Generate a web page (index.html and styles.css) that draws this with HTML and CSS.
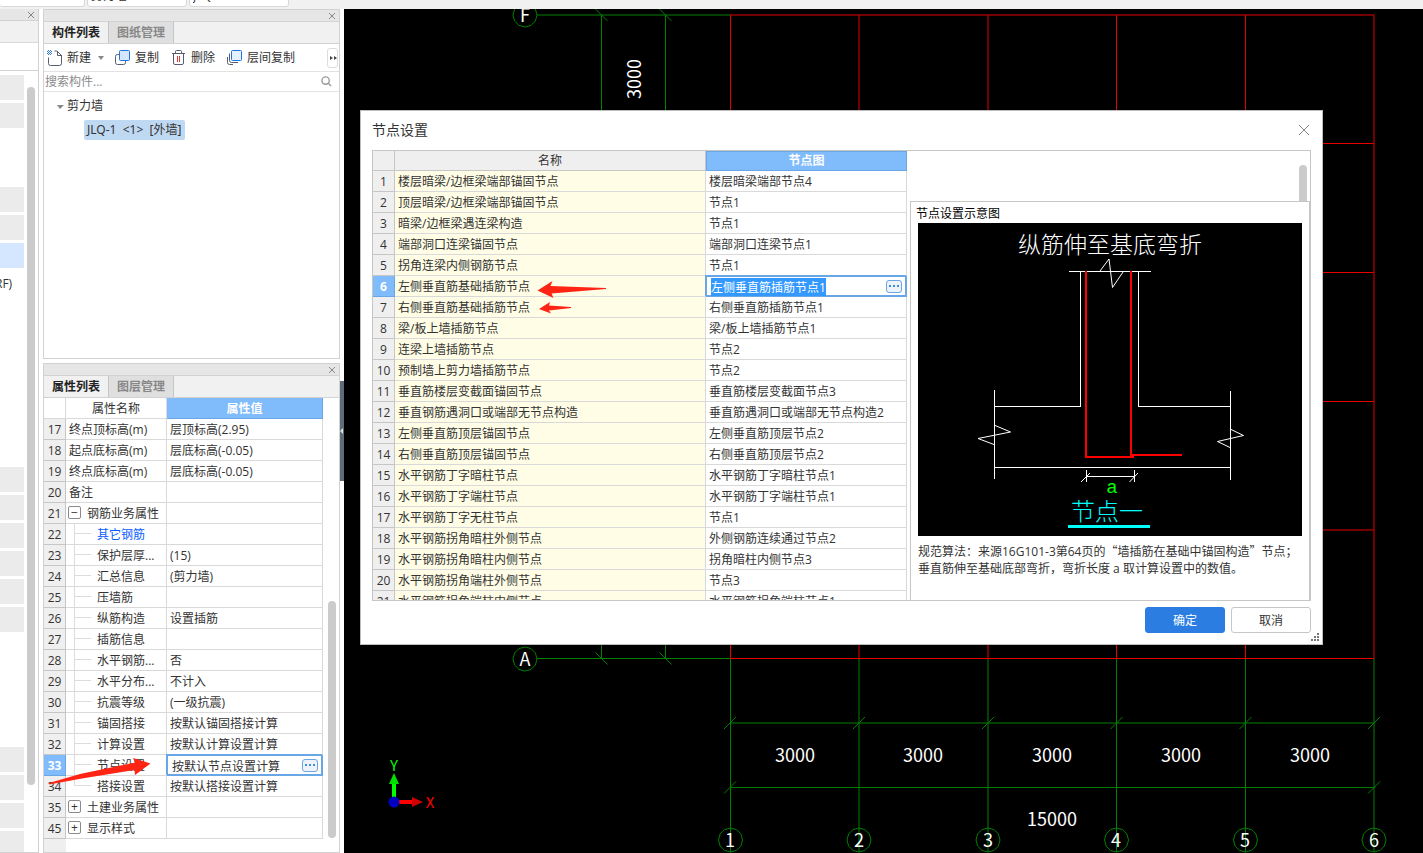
FILE: index.html
```html
<!DOCTYPE html>
<html lang="zh-CN">
<head>
  <meta charset="UTF-8">
  <meta name="viewport" content="width=device-width, initial-scale=1.0">
  <title>节点设置</title>
  <link rel="stylesheet" href="styles.css">
</head>
<body>
  <header class="topbar">
    <select class="combo combo-first" aria-label="楼层"><option></option></select>
    <select class="combo" aria-label="构件类型"><option>剪力墙</option></select>
    <select class="combo" aria-label="构件"><option>JLQ-1</option></select>
  </header>

  <main class="workspace">
    <!-- Navegação -->
    <nav class="nav" aria-label="导航树">
      <div class="panel-title">
        <button class="close" aria-label="关闭"><svg viewBox="0 0 8 8"><path d="M1 1l6 6M7 1L1 7"/></svg></button>
      </div>
      <div class="nav-tabs"></div>
      <div class="nav-tools"></div>
      <div class="nav-body">
        <ul class="nav-list">
          <li class="fill"></li><li class="fill"></li><li></li><li></li>
          <li class="fill"></li><li class="fill"></li><li class="current"></li><li>RF)</li>
          <li></li><li></li><li></li><li></li><li></li><li></li>
          <li class="fill"></li><li class="fill"></li><li class="fill"></li>
          <li class="fill"></li><li class="fill"></li><li class="fill"></li>
          <li></li><li></li><li></li><li></li>
          <li class="fill"></li><li class="fill"></li><li class="fill"></li><li class="fill"></li>
        </ul>
        <div class="nav-scroll"></div>
      </div>
    </nav>

    <div class="side">
      <section class="panel">
        <div class="panel-title">
          <button class="close" aria-label="关闭"><svg viewBox="0 0 8 8"><path d="M1 1l6 6M7 1L1 7"/></svg></button>
        </div>
        <div class="tabs">
          <button class="tab active">构件列表</button>
          <button class="tab">图纸管理</button>
        </div>
        <div class="toolbar">
          <button class="tool">
            <svg viewBox="0 0 16 16"><path d="M1.500 7.500v6q0 2 2 2h9q2 0 2-2V5.500l-4.500-4.500H7.500M10.500 1v4.500H15" fill="none" stroke="#555d70"/><path d="M1 0h1v1H1zM3 0h1v1H3zM0 1h1v1H0zM2 1h1v1H2zM4 1h1v1H4zM1 2h1v1H1zM3 2h1v1H3zM0 3h1v1H0zM2 3h1v1H2zM4 3h1v1H4zM1 4h1v1H1zM3 4h1v1H3z" fill="#2d7be5"/></svg>
            新建
          </button>
          <span class="caret"></span>
          <button class="tool">
            <svg viewBox="0 0 16 16"><path d="M5 4.500H2.500q-2 0-2 2v6q0 2 2 2h6q2 0 2-2V10" fill="none" stroke="#555d70"/><rect x="4.500" y=".5" width="10" height="10" rx="1" fill="#d3e6fc" stroke="#1e74e0"/></svg>
            复制
          </button>
          <button class="tool">
            <svg viewBox="0 0 16 16"><path d="M1 3.500h13M4.500 3V1.500q0-1 1-1h4q1 0 1 1V3M2.500 4v9q0 1.500 1.500 1.500h7q1.500 0 1.500-1.500V4" fill="none" stroke="#555d70"/><path d="M6.500 6v6M8.500 6v6" stroke="#e33b3b"/></svg>
            删除
          </button>
          <button class="tool">
            <svg viewBox="0 0 16 16"><path d="M2.500 3.500v7q0 2 2 2H11M.5 7v5.500q0 2 2 2H6" fill="none" stroke="#555d70"/><rect x="4.500" y=".5" width="10" height="10" rx="1" fill="#e6f1fe" stroke="#1e74e0"/></svg>
            层间复制
          </button>
          <button class="more" aria-label="更多"><svg viewBox="0 0 8 6"><path d="M1 1l3 2-3 2zM5 1l3 2-3 2z" fill="#444"/></svg></button>
        </div>
        <div class="search">
          <input type="text" placeholder="搜索构件..." aria-label="搜索构件">
          <svg viewBox="0 0 12 12"><circle cx="5" cy="5" r="4" fill="none" stroke="#999" stroke-width="1.500"/><path d="M8 8l3 3" stroke="#999" stroke-width="1.500"/></svg>
        </div>
        <ul class="tree">
          <li><span class="caret"></span>剪力墙
            <ul>
              <li><span class="picked">JLQ-1  &lt;1&gt;  [外墙]</span></li>
            </ul>
          </li>
        </ul>
      </section>

      <section class="panel panel-props">
        <div class="panel-title">
          <button class="close" aria-label="关闭"><svg viewBox="0 0 8 8"><path d="M1 1l6 6M7 1L1 7"/></svg></button>
        </div>
        <div class="tabs">
          <button class="tab active">属性列表</button>
          <button class="tab">图层管理</button>
        </div>
        <div class="props">
          <div class="props-rows">
            <table class="grid">
              <colgroup><col class="c-num"><col class="c-prop"><col class="c-val"></colgroup>
              <thead>
                <tr><th></th><th>属性名称</th><th class="on">属性值</th></tr>
              </thead>
              <tbody>
                <tr><th>17</th><td>终点顶标高(m)</td><td>层顶标高(2.95)</td></tr>
                <tr><th>18</th><td>起点底标高(m)</td><td>层底标高(-0.05)</td></tr>
                <tr><th>19</th><td>终点底标高(m)</td><td>层底标高(-0.05)</td></tr>
                <tr><th>20</th><td>备注</td><td></td></tr>
                <tr><th>21</th><td><button class="fold" aria-label="折叠">−</button>钢筋业务属性</td><td></td></tr>
                <tr><th>22</th><td class="child"><a href="#">其它钢筋</a></td><td></td></tr>
                <tr><th>23</th><td class="child">保护层厚...</td><td>(15)</td></tr>
                <tr><th>24</th><td class="child">汇总信息</td><td>(剪力墙)</td></tr>
                <tr><th>25</th><td class="child">压墙筋</td><td></td></tr>
                <tr><th>26</th><td class="child">纵筋构造</td><td>设置插筋</td></tr>
                <tr><th>27</th><td class="child">插筋信息</td><td></td></tr>
                <tr><th>28</th><td class="child">水平钢筋...</td><td>否</td></tr>
                <tr><th>29</th><td class="child">水平分布...</td><td>不计入</td></tr>
                <tr><th>30</th><td class="child">抗震等级</td><td>(一级抗震)</td></tr>
                <tr><th>31</th><td class="child">锚固搭接</td><td>按默认锚固搭接计算</td></tr>
                <tr><th>32</th><td class="child">计算设置</td><td>按默认计算设置计算</td></tr>
                <tr><th class="on">33</th><td class="child">节点设置</td><td class="editing"><div class="editor"><input type="text" value="按默认节点设置计算" aria-label="节点设置"><button class="dots" aria-label="选择"><i></i><i></i><i></i></button></div></td></tr>
                <tr><th>34</th><td class="child last">搭接设置</td><td>按默认搭接设置计算</td></tr>
                <tr><th>35</th><td><button class="fold" aria-label="展开">+</button>土建业务属性</td><td></td></tr>
                <tr><th>45</th><td><button class="fold" aria-label="展开">+</button>显示样式</td><td></td></tr>
              </tbody>
            </table>
          </div>
          <div class="props-scroll"></div>
        </div>
      </section>
    </div>

    <div class="splitter"><button class="handle" aria-label="收起"></button></div>

    <!-- Desenho dos eixos -->
    <div class="canvas">
      <svg viewBox="344 9 1079 844" preserveAspectRatio="xMinYMin slice">
        <defs>
          <path id="bubble" d="M12 0L10.400 6 6 10.400 0 12-6 10.400-10.400 6-12 0-10.400-6-6-10.400 0-12 6-10.400 10.400-6z"/>
          <path id="up" d="M-6 6L6-6"/>
          <path id="down" d="M-6-6L6 6"/>
        </defs>
        <g class="axis">
          <path d="M537 15H730M537 658.500H730M601.500 15V658M665.500 15V658"/>
          <path d="M730.500 658V852M859 658V852M988 658V852M1116.500 658V852M1245.500 658V852M1374 658V852"/>
          <path d="M730 723H1374M730 787.500H1374"/>
          <use href="#down" x="601.500" y="15"/><use href="#down" x="665.500" y="15"/>
          <use href="#down" x="601.500" y="658.500"/><use href="#down" x="665.500" y="658.500"/>
          <use href="#up" x="730" y="723"/><use href="#up" x="859" y="723"/><use href="#up" x="988" y="723"/>
          <use href="#up" x="1116.500" y="723"/><use href="#up" x="1245.500" y="723"/><use href="#up" x="1374" y="723"/>
          <use href="#up" x="730" y="787.500"/><use href="#up" x="1374" y="787.500"/>
          <use href="#bubble" x="525" y="15"/><use href="#bubble" x="525" y="659"/>
          <use href="#bubble" x="730.500" y="840"/><use href="#bubble" x="859" y="840"/><use href="#bubble" x="988" y="840"/>
          <use href="#bubble" x="1116.500" y="840"/><use href="#bubble" x="1245.500" y="840"/><use href="#bubble" x="1374" y="840"/>
        </g>
        <path class="beam" d="M730 15H1374M730 143.500H1374M730 272.500H1374M730 401.500H1374M730 530H1374M730 658.500H1374M730.500 15V658M859 15V658M988 15V658M1116.500 15V658M1245.500 15V658M1374 15V658"/>
        <g class="dim">
          <text x="525" y="22">F</text>
          <text x="525" y="666">A</text>
          <text x="730" y="847">1</text>
          <text x="859" y="847">2</text>
          <text x="988" y="847">3</text>
          <text x="1116" y="847">4</text>
          <text x="1245" y="847">5</text>
          <text x="1374" y="847">6</text>
          <text x="795" y="762">3000</text>
          <text x="923" y="762">3000</text>
          <text x="1052" y="762">3000</text>
          <text x="1181" y="762">3000</text>
          <text x="1310" y="762">3000</text>
          <text x="1052" y="826">15000</text>
          <text transform="translate(641 79) rotate(-90)">3000</text>
        </g>
        <path d="M399 802h14" stroke="#f00" stroke-width="4"/>
        <path d="M412 797l11 5-11 5z" fill="#d00000"/>
        <path d="M394 798v-15" stroke="#0f0" stroke-width="4"/>
        <path d="M389 784l5-11 5 11z" fill="#00e000"/>
        <circle cx="394" cy="802" r="5.500" fill="#0000c0"/>
        <text class="gizmo-y" x="394" y="771">Y</text>
        <text class="gizmo-x" x="430" y="808">X</text>
      </svg>
    </div>
  </main>

  <div class="dialog" role="dialog" aria-labelledby="dialogTitle">
    <div class="dialog-head">
      <h1 id="dialogTitle">节点设置</h1>
      <button class="dialog-close" aria-label="关闭"><svg viewBox="0 0 12 12"><path d="M1 1l10 10M11 1L1 11"/></svg></button>
    </div>

    <div class="dialog-body">
      <div class="nodes">
        <table class="grid grid-nodes">
          <colgroup><col class="c-num"><col class="c-name"><col class="c-node"></colgroup>
          <thead>
            <tr><th></th><th>名称</th><th class="on bold">节点图</th></tr>
          </thead>
          <tbody>
            <tr><th>1</th><td>楼层暗梁/边框梁端部锚固节点</td><td>楼层暗梁端部节点4</td></tr>
            <tr><th>2</th><td>顶层暗梁/边框梁端部锚固节点</td><td>节点1</td></tr>
            <tr><th>3</th><td>暗梁/边框梁遇连梁构造</td><td>节点1</td></tr>
            <tr><th>4</th><td>端部洞口连梁锚固节点</td><td>端部洞口连梁节点1</td></tr>
            <tr><th>5</th><td>拐角连梁内侧钢筋节点</td><td>节点1</td></tr>
            <tr><th class="on">6</th><td>左侧垂直筋基础插筋节点</td><td class="editing"><div class="editor"><input type="text" id="nodeInput" value="左侧垂直筋插筋节点1" aria-label="节点图"><button class="dots" aria-label="选择"><i></i><i></i><i></i></button></div></td></tr>
            <tr><th>7</th><td>右侧垂直筋基础插筋节点</td><td>右侧垂直筋插筋节点1</td></tr>
            <tr><th>8</th><td>梁/板上墙插筋节点</td><td>梁/板上墙插筋节点1</td></tr>
            <tr><th>9</th><td>连梁上墙插筋节点</td><td>节点2</td></tr>
            <tr><th>10</th><td>预制墙上剪力墙插筋节点</td><td>节点2</td></tr>
            <tr><th>11</th><td>垂直筋楼层变截面锚固节点</td><td>垂直筋楼层变截面节点3</td></tr>
            <tr><th>12</th><td>垂直钢筋遇洞口或端部无节点构造</td><td>垂直筋遇洞口或端部无节点构造2</td></tr>
            <tr><th>13</th><td>左侧垂直筋顶层锚固节点</td><td>左侧垂直筋顶层节点2</td></tr>
            <tr><th>14</th><td>右侧垂直筋顶层锚固节点</td><td>右侧垂直筋顶层节点2</td></tr>
            <tr><th>15</th><td>水平钢筋丁字暗柱节点</td><td>水平钢筋丁字暗柱节点1</td></tr>
            <tr><th>16</th><td>水平钢筋丁字端柱节点</td><td>水平钢筋丁字端柱节点1</td></tr>
            <tr><th>17</th><td>水平钢筋丁字无柱节点</td><td>节点1</td></tr>
            <tr><th>18</th><td>水平钢筋拐角暗柱外侧节点</td><td>外侧钢筋连续通过节点2</td></tr>
            <tr><th>19</th><td>水平钢筋拐角暗柱内侧节点</td><td>拐角暗柱内侧节点3</td></tr>
            <tr><th>20</th><td>水平钢筋拐角端柱外侧节点</td><td>节点3</td></tr>
            <tr><th>21</th><td>水平钢筋拐角端柱内侧节点</td><td>水平钢筋拐角端柱节点1</td></tr>
          </tbody>
        </table>
      </div>
      <div class="detail">
        <div class="detail-top"><div class="detail-scroll"></div></div>
        <div class="preview">
          <h2>节点设置示意图</h2>
          <svg class="diagram" viewBox="918 223 384 313">
            <rect x="918" y="223" width="384" height="313" fill="#000"/>
            <g fill="none" stroke="#fff" shape-rendering="crispEdges">
              <path d="M1069 271.500H1151M1080.500 271V406.500H994M1138.500 271V406.500H1230M994.500 390V479M1230.500 391V480M994 467.500H1230"/>
              <path d="M1086.500 470V482M1134.500 470V482M1086 476.500H1135"/>
            </g>
            <g fill="none" stroke="#fff">
              <path d="M1100 271L1109 259 1112.500 287.500 1123 272"/>
              <path d="M994 425L1010.500 432 978 438.500 994 444.500"/>
              <path d="M1230 429L1243.500 435.500 1217.500 441.500 1230 447.500"/>
              <path d="M1081 482L1090 473M1129.500 482L1138 473"/>
            </g>
            <path d="M1086 271V457H1134M1131 271V455H1182" fill="none" stroke="#f00" stroke-width="2"/>
            <text class="cad-title" x="1110" y="253">纵筋伸至基底弯折</text>
            <text class="cad-a" x="1112" y="493">a</text>
            <text class="cad-name" x="1107" y="520">节点一</text>
            <path d="M1068 526.500H1150" stroke="#0ff" stroke-width="3"/>
          </svg>
          <p>规范算法：来源16G101-3第64页的<span class="quote">“</span>墙插筋在基础中锚固构造<span class="quote">”</span>节点；<br>垂直筋伸至基础底部弯折，弯折长度 a 取计算设置中的数值。</p>
        </div>
      </div>
    </div>

    <div class="dialog-foot">
      <button class="btn primary">确定</button>
      <button class="btn">取消</button>
    </div>
    <svg class="grip" viewBox="0 0 8 8"><path d="M6 0h2v2H6zM3 3h2v2H3zM6 3h2v2H6zM0 6h2v2H0zM3 6h2v2H3zM6 6h2v2H6z" fill="#777"/></svg>
  </div>

  <!-- Setas de marcação -->
  <svg class="marks" width="620" height="800" aria-hidden="true">
    <path d="M537.500 290.500L552.500 281 550.500 286 606 288 606 289 551.500 293.500 553.500 298z"/>
    <path d="M539 309L550 302 549 305.500 571 307 571 308 549 310.500 551 313.500z"/>
    <path d="M49 783L80 774 135 762.500 133 758 150.500 763.500 135 775 134.500 770 85 778 49 784.500z"/>
  </svg>

  <script>
    // Seleciona o texto da célula em edição
    const nodeInput = document.getElementById("nodeInput");
    nodeInput.focus();
    nodeInput.select();
  </script>
</body>
</html>
```
FILE: styles.css
```css
* {
  margin: 0;
  padding: 0;
  box-sizing: border-box;
}

body {
  height: 100vh;
  display: flex;
  flex-direction: column;
  overflow: hidden;
  position: relative;
  background-color: #fff;
  color: #333;
  font-family: "Open Sans", "Noto Sans CJK SC", sans-serif;
  font-size: 12px;
  line-height: 20px;
}

button,
input,
select {
  font: inherit;
  color: inherit;
  border: none;
  background: none;
}

ul {
  list-style: none;
}

/* Barra superior */
.topbar {
  flex: none;
  height: 9px;
  display: flex;
  align-items: flex-end;
  gap: 2px;
  padding-bottom: 2px;
  overflow: hidden;
  background-color: #f1f1f1;
}

.combo {
  appearance: none;
  width: 100px;
  height: 22px;
  padding: 0 3px;
  border: 1px solid #d8d8d8;
  border-radius: 3px;
  background-color: #fff;
}

.combo-first {
  width: 85px;
  border-left: none;
}

.workspace {
  flex: 1;
  min-height: 0;
  display: flex;
}

.panel-title {
  flex: none;
  height: 12px;
  display: flex;
  align-items: center;
  justify-content: flex-end;
  padding-right: 3px;
  background-color: #e6e6e6;
  border-bottom: 1px solid #d2d2d2;
}

.close {
  display: flex;
}

.close svg {
  width: 8px;
  height: 8px;
}

.close path,
.dialog-close path {
  fill: none;
  stroke: #888;
}

/* Navegação esquerda */
.nav {
  flex: none;
  width: 39px;
  display: flex;
  flex-direction: column;
  border-right: 1px solid #d2d2d2;
  border-bottom: 1px solid #d2d2d2;
  margin-right: 4px;
}

.nav-tabs {
  flex: none;
  height: 22px;
  background-color: #f1f1f1;
  border-bottom: 1px solid #d9d9d9;
}

.nav-tools {
  flex: none;
  height: 28px;
  border-bottom: 1px solid #d2d2d2;
}

.nav-body {
  flex: 1;
  min-height: 0;
  display: flex;
  gap: 3px;
  overflow: hidden;
}

.nav-list {
  width: 24px;
  display: flex;
  flex-direction: column;
  gap: 3px;
  padding-top: 4px;
}

.nav-list li {
  flex: none;
  height: 25px;
  line-height: 25px;
  text-indent: -5px;
  overflow: hidden;
}

.nav-list .fill {
  background-color: #ebebeb;
}

.nav-list .current {
  background-color: #d4e7ff;
}

.nav-scroll {
  width: 8px;
  height: 698px;
  margin-top: 16px;
  border-radius: 4px;
  background-color: #cbcbcb;
}

/* Painéis */
.side {
  flex: none;
  width: 297px;
  display: flex;
  flex-direction: column;
  gap: 4px;
}

.panel {
  flex: none;
  height: 350px;
  display: flex;
  flex-direction: column;
  border: 1px solid #d2d2d2;
}

.panel-props {
  flex: 1;
  height: auto;
  min-height: 0;
}

.tabs {
  flex: none;
  display: flex;
  background-color: #f1f1f1;
  border-bottom: 1px solid #d2d2d2;
}

.tab {
  width: 65px;
  height: 21px;
  font-weight: bold;
  color: #888;
  background-color: #dfdfdf;
  border-right: 1px solid #c6c6c6;
}

.tab.active {
  color: #222;
  background-color: #f1f1f1;
}

.toolbar {
  flex: none;
  height: 28px;
  display: flex;
  align-items: center;
  gap: 12px;
  padding: 0 1px 0 3px;
  border-bottom: 1px solid #e2e2e2;
}

.tool {
  display: flex;
  align-items: center;
  gap: 4px;
  padding-top: 1px;
  white-space: nowrap;
}

.tool svg {
  width: 16px;
  height: 16px;
}

.caret {
  width: 0;
  height: 0;
  border: 3px solid transparent;
  border-top: 4px solid #888;
  border-bottom: none;
}

.toolbar .caret {
  margin: 0 -1px 0 -5px;
}

.more {
  width: 11px;
  height: 20px;
  margin-left: auto;
  border: 1px solid #ddd;
  border-radius: 3px;
  display: flex;
  align-items: center;
  justify-content: center;
}

.more svg {
  flex: none;
  width: 8px;
  height: 6px;
}

.search {
  flex: none;
  height: 20px;
  display: flex;
  align-items: center;
  padding: 0 7px 0 1px;
  border-bottom: 1px solid #e2e2e2;
}

.search input {
  flex: 1;
  min-width: 0;
  outline: none;
}

.search input::placeholder {
  color: #8c8c8c;
}

.search svg {
  width: 11px;
  height: 11px;
}

.tree {
  padding: 4px 0 0 13px;
}

.tree .caret {
  display: inline-block;
  vertical-align: middle;
  margin-right: 3px;
  border-width: 4px 4px 0 3px;
}

.tree ul {
  padding: 4px 0 0 27px;
}

.picked {
  display: inline-block;
  padding: 0 4px 0 3px;
  border-radius: 2px;
  background-color: #c0d9f3;
  font-family: "Noto Sans", "Noto Sans CJK SC", sans-serif;
  white-space: pre;
}

/* Tabelas */
.grid {
  border-collapse: separate;
  border-spacing: 0;
  table-layout: fixed;
  width: 279px;
}

.c-num {
  width: 22px;
}

.c-prop {
  width: 101px;
}

.c-val {
  width: 156px;
}

.c-name {
  width: 311px;
}

.c-node {
  width: 201px;
}

.grid th,
.grid td {
  height: 21px;
  padding: 2px 3px 0;
  line-height: 18px;
  border-right: 1px solid #d9d9d9;
  border-bottom: 1px solid #d9d9d9;
  white-space: nowrap;
  overflow: hidden;
}

.grid th {
  padding: 2px 0 0;
  font-weight: normal;
  text-align: center;
}

.grid td {
  text-align: left;
}

.grid tbody th {
  background-color: #efefef;
  border-color: #c6c6c6;
}

.grid .on {
  color: #fff;
  background-color: #80bbfb;
  border-color: #68a6e6;
}

.grid .on {
  font-weight: bold;
}

.grid a {
  color: #0a5cff;
  text-decoration: none;
}

.grid .child {
  padding-left: 31px;
  background-image: linear-gradient(#ddd, #ddd), linear-gradient(#ddd, #ddd);
  background-size: 1px 100%, 16px 1px;
  background-position: 8px 0, 9px 9px;
  background-repeat: no-repeat;
}

.grid .last {
  background-size: 1px 10px, 16px 1px;
}

.fold {
  width: 13px;
  height: 13px;
  margin: -4px 6px 0 -1px;
  border: 1px solid #8a8a8a;
  border-radius: 2px;
  line-height: 10px;
  vertical-align: middle;
}

.grid .editing {
  padding: 0 4px;
  border-color: #68a6e6;
  box-shadow: inset 0 0 0 1px #68a6e6, -1px -1px 0 0 #68a6e6;
}

.editor {
  height: 20px;
  display: flex;
  align-items: center;
}

.editor input {
  flex: 1;
  min-width: 0;
  height: 20px;
  padding: 2px 0 0 1px;
  line-height: 18px;
  outline: none;
}

.editor input::selection {
  color: #fff;
  background-color: #3399ff;
}

.dots {
  flex: none;
  width: 16px;
  height: 13px;
  border: 1px solid #68a6e6;
  border-radius: 3px;
  background-color: #eef2f9;
  display: flex;
  align-items: center;
  justify-content: center;
  gap: 2px;
}

.dots i {
  width: 2px;
  height: 2px;
  background-color: #3f8be0;
}

.grid-nodes {
  width: 534px;
}

.grid-nodes thead th {
  height: 20px;
  padding: 1px 0 0;
  border-color: #c6c6c6;
  background-color: #efefef;
}

.grid-nodes thead .on {
  padding: 0;
  background-color: #80bbfb;
  border: 1px solid #68a6e6;
}

.grid-nodes td:nth-child(2) {
  background-color: #fffde5;
}

.props {
  flex: 1;
  min-height: 0;
  display: flex;
  overflow: hidden;
}

.props-rows {
  flex: 1;
  background: linear-gradient(#efefef, #efefef) 0 100% / 22px 40px no-repeat;
}

.props-rows thead th {
  background-color: #fff;
}

.props-rows thead .on {
  background-color: #80bbfb;
}

.props-scroll {
  width: 8px;
  height: 237px;
  margin: 203px 3px 0 0;
  border-radius: 4px;
  background-color: #cbcbcb;
}

.splitter {
  flex: none;
  width: 4px;
  padding-top: 372px;
}

.handle {
  display: flex;
  align-items: center;
  width: 4px;
  height: 100px;
  background-color: #5f6b78;
}

.handle::before {
  content: "";
  border: 3px solid transparent;
  border-right-color: #ddd;
  border-left: none;
}

/* Área de desenho */
.canvas {
  flex: 1;
  min-width: 0;
  background-color: #000;
  overflow: hidden;
}

.canvas svg {
  display: block;
  width: 100%;
  height: 100%;
}

.axis {
  fill: none;
  stroke: #008000;
}

.beam {
  fill: none;
  stroke: #e60000;
}

.dim text {
  fill: #fff;
  font-family: "Noto Sans CJK SC", sans-serif;
  font-size: 18px;
  text-anchor: middle;
}

.gizmo-x,
.gizmo-y {
  font-family: "Noto Sans CJK SC", sans-serif;
  font-size: 15px;
  text-anchor: middle;
}

.gizmo-x {
  fill: #f00;
}

.gizmo-y {
  fill: #0f0;
}

/* Janela */
.dialog {
  position: absolute;
  left: 360px;
  top: 110px;
  width: 963px;
  padding: 0 11px 11px;
  background-color: #fff;
  border: 1px solid #bdbdbd;
}

.dialog-head {
  height: 39px;
  display: flex;
  align-items: center;
  justify-content: space-between;
  padding: 0 1px 2px 0;
}

.dialog-head h1 {
  font-size: 14px;
  font-weight: normal;
}

.dialog-close {
  display: flex;
}

.dialog-close svg {
  width: 12px;
  height: 12px;
}

.dialog-body {
  height: 451px;
  display: flex;
  gap: 3px;
  border: 1px solid #c6c6c6;
  overflow: hidden;
}

.nodes {
  flex: none;
  overflow: hidden;
}

.detail {
  flex: 1;
  min-width: 0;
  display: flex;
  flex-direction: column;
}

.detail-top {
  flex: none;
  height: 50px;
  display: flex;
  justify-content: flex-end;
  padding: 14px 3px 0 0;
}

.detail-scroll {
  width: 8px;
  border-radius: 4px 4px 0 0;
  background-color: #cbcbcb;
}

.preview {
  flex: 1;
  padding: 3px 7px 0;
  border: 1px solid #c6c6c6;
  border-bottom: none;
}

.preview h2 {
  margin-left: -2px;
  font-size: 12px;
  font-weight: normal;
  line-height: 18px;
  color: #000;
}

.diagram {
  display: block;
  width: 100%;
}

.diagram text {
  font-family: "Noto Sans CJK SC", sans-serif;
  font-weight: 300;
  text-anchor: middle;
}

.diagram .cad-title {
  font-size: 23px;
  fill: #fff;
}

.diagram .cad-name {
  font-size: 24px;
  fill: #0ff;
}

.diagram .cad-a {
  font-family: "Liberation Mono", monospace;
  font-size: 19px;
  font-weight: normal;
  fill: #0f0;
}

.preview p {
  margin-top: 6px;
  line-height: 17px;
  white-space: nowrap;
}

.quote {
  font-family: "Noto Sans CJK SC", sans-serif;
}

.dialog-foot {
  display: flex;
  justify-content: flex-end;
  gap: 6px;
  margin-top: 6px;
}

.btn {
  width: 80px;
  height: 26px;
  padding-top: 2px;
  border: 1px solid #c6c6c6;
  border-radius: 3px;
  background-color: #fff;
}

.btn.primary {
  color: #fff;
  background-color: #2b7de1;
  border-color: #2b7de1;
}

.grip {
  position: absolute;
  right: 3px;
  bottom: 3px;
  width: 8px;
  height: 8px;
}

.marks {
  position: absolute;
  left: 0;
  top: 0;
  fill: #ff2414;
  pointer-events: none;
}
```
